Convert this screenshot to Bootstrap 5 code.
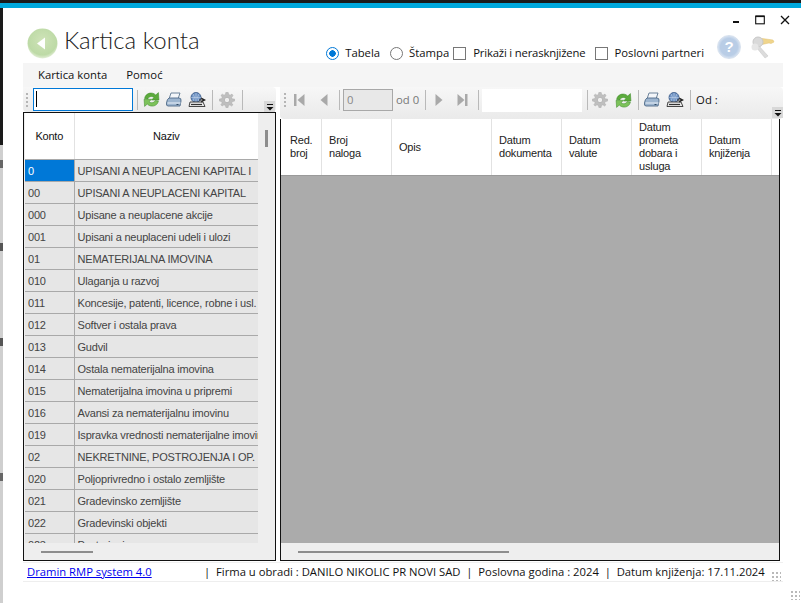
<!DOCTYPE html>
<html lang="sr">
<head>
  <meta charset="UTF-8">
  <title>Kartica konta</title>
  <link href="https://cdn.jsdelivr.net/npm/bootstrap@5.3.3/dist/css/bootstrap.min.css" rel="stylesheet">
  <style>
    html, body { height: 603px; }
    body { margin: 0; overflow: hidden; background: #fff; color: #111; font-family: "Open Sans", sans-serif; font-size: 11.3px; }
    .top-black { height: 3px; background: #1a1a1a; }
    .top-cyan { height: 5px; background: #00a8dc; }
    .edge-strip { width: 3px; height: 595px; flex: none; background: linear-gradient(#1a1a1a 0 137px, #cfcfcf 137px 152px, #666 152px 160px, #cfcfcf 160px 235px, #555 235px 243px, #cfcfcf 243px 330px, #555 330px 338px, #cfcfcf 338px 465px, #666 465px 473px, #cfcfcf 473px); }
    .win-main { width: 798px; height: 595px; }
    .caption-row { height: 20px; padding: 7px 11px 0 0; gap: 15px; }
    .head-row { height: 35px; padding: 0 26px 0 24px; }
    .win-title { font-family: Lato, "Open Sans", sans-serif; font-size: 24px; line-height: 30px; margin: -3px 0 0 6px; color: #222; font-weight: 300; height: 30px; }
    .opt-row { margin-left: auto; margin-top: 16px; height: 18px; line-height: 18px; }
    .opt-mark { width: 13px; height: 13px; border: 1px solid #777; background: #fff; flex: none; }
    .opt-round { border-radius: 50%; }
    .opt-on { border-color: #0078d7; background: radial-gradient(circle, #0078d7 0 3px, #fff 3.5px); }
    .opt-tight { letter-spacing: -.18px; }
    .menu-strip { width: 760px; height: 24px; margin-left: 20px; background: #f5f5f5; padding-left: 15px; gap: 19px; line-height: 24px; }
    .work-area { margin-left: 20px; width: 760px; gap: 4px; }
    .left-side { width: 253px; }
    .right-side { width: 503px; }
    .tool-bar { background: linear-gradient(#f7f7f7, #eaeaea); border-radius: 0 4px 4px 4px; position: relative; }
    .left-bar { height: 25px; padding-left: 3px; }
    .right-bar { height: 32px; padding: 0 0 6px 4px; }
    .grip-dots { width: 2px; height: 14px; margin-right: 5px; background: repeating-linear-gradient(#b5b5b5 0 2px, transparent 2px 4px); flex: none; }
    .tool-sep { width: 1px; height: 20px; background: #b9b9b9; flex: none; }
    .find-box { width: 100px; height: 23px; border: 1px solid #0078d7; background: #fff; padding: 2px 0 0 2px; flex: none; }
    .find-caret { width: 1px; height: 16px; background: #000; }
    .over-btn { width: 11px; height: 11px; background: #d8d8d8; margin-left: auto; align-self: flex-end; flex: none; }
    .left-bar .over-btn { margin-right: 1px; }
    .right-bar .over-btn { margin-bottom: -5px; }
    .page-box { width: 50px; height: 22px; border: 1px solid #a8a8a8; background: #e8e8e8; color: #888; padding-left: 3px; line-height: 20px; flex: none; }
    .page-of { color: #777; }
    .filter-box { width: 100px; height: 23px; background: #fff; flex: none; }
    .faded-icon { opacity: .8; }
    .sp-3 { margin-left: 3px; }
    .sp-4 { margin-left: 4px; }
    .sp-5 { margin-left: 5px; }
    .sp-6 { margin-left: 6px; }
    .sp-7 { margin-left: 7px; }
    .sp-9 { margin-left: 9px; }
    .sp-10 { margin-left: 10px; }
    .sp-11 { margin-left: 11px; }
    .sp-14 { margin-left: 14px; }
    .sp-15 { margin-left: 15px; }
    .after-10 { margin-right: 10px; }
    .grid-panel { border: 1px solid #111; background: #eee; overflow: hidden; }
    .left-panel { height: 449px; padding-left: 1px; }
    .right-panel { height: 442px; width: 500px; border-top: 0; }
    .grid-scroll { height: 430px; overflow: hidden; }
    .right-panel .grid-scroll { height: 424px; }
    .left-grid { width: 233px; background: #fff; }
    .vbar { width: 17px; padding-top: 17px; }
    .vbar-thumb { width: 3px; height: 17px; background: #8d8d8d; margin: 0 auto; }
    .konto-table { table-layout: fixed; width: 233px; margin: 0; font-family: "Liberation Sans", sans-serif; font-size: 11px; letter-spacing: -.2px; color: #444; border-collapse: collapse; }
    .konto-table th { height: 46px; background: #fff; color: #111; font-weight: 400; text-align: center; vertical-align: middle; padding: 0; border: 0; border-right: 1px solid #e2e2e2; border-bottom: 1px solid #a9a9a9; }
    .konto-table td { height: 22px; background: #e6e6e6; color: #444; padding: 1px 0 0 3px; border: 0; border-right: 1px solid #a9a9a9; border-bottom: 1px solid #a9a9a9; white-space: nowrap; overflow: hidden; vertical-align: middle; line-height: 20px; }
    .konto-table th:last-child, .konto-table td:last-child { border-right: 0; }
    .konto-table td.cell-on { background: #0078d7; color: #fff; }
    .code-col { width: 49px; }
    .hbar { height: 17px; padding-top: 8px; }
    .hbar-thumb { height: 2px; background: #8d8d8d; }
    .left-thumb { width: 52px; margin-left: 16px; }
    .right-thumb { width: 211px; margin-left: 17px; }
    .doc-head { height: 56px; background: #fff; font-family: "Liberation Sans", sans-serif; font-size: 11px; letter-spacing: -.2px; line-height: 13px; color: #222; }
    .doc-col { border-right: 1px solid #e2e2e2; padding-left: 7px; flex: none; width: 70px; }
    .doc-first { width: 41px; padding-left: 9px; }
    .doc-wide { width: 100px; }
    .doc-empty { height: 368px; background: #ababab; border-top: 1px solid #9a9a9a; }
    .status-row { width: 760px; height: 20px; margin: 1px 0 0 20px; border-top: 1px solid #f0f0f0; border-bottom: 1px solid #eee; line-height: 18px; font-size: 11.25px; }
    .status-link { color: #0000ee; width: 181px; padding-left: 4px; flex: none; }
    .status-text { white-space: pre; }
    .size-grip { width: 10px; height: 10px; margin-left: auto; margin-right: 2px; background: radial-gradient(circle, #b9b9b9 1px, transparent 1.2px) 0 0 / 4px 4px; flex: none; align-self: flex-end; }
    .win-grip { width: 10px; height: 10px; margin: 8px 1px 0 auto; background: radial-gradient(circle, #b9b9b9 1px, transparent 1.2px) 0 0 / 4px 4px; }
    .help-mark { width: 24px; height: 24px; margin: 7px 0 0 13px; border-radius: 50%; background: radial-gradient(circle, #b9cde6 55%, #e3ebf5 80%); border: 1px solid #d7e1ee; color: #fff; font-weight: 700; font-size: 15px; line-height: 22px; text-align: center; font-family: "Liberation Sans", sans-serif; flex: none; }
    .keys-mark { margin: 7px 0 0 9px; }
    .icon-defs { position: absolute; }
    svg { display: block; flex: none; }
  </style>
</head>
<body>
  <svg class="icon-defs" width="0" height="0">
    <defs>
      <symbol id="ic-refresh" viewBox="0 0 16 16">
        <path d="M1.500 7 C2.500 1.500 9 .5 12 3.800 L14.500 1.500 L15 8.500 L8 8.500 L10.300 6.200 C8.500 4.500 5.500 5 4.500 7.500 Z" fill="#5cab3c" stroke="#3d8a2a" stroke-width=".5"/>
        <path d="M14.500 9.500 C13.500 14.800 7 15.500 4 12.300 L1.500 14.500 L1 7.800 L8 7.800 L5.700 10 C7.500 11.700 10.500 11.200 11.500 9 Z" fill="#7cc25a" stroke="#3d8a2a" stroke-width=".5"/>
      </symbol>
      <symbol id="ic-print" viewBox="0 0 16 16">
        <path d="M5 1 H14 L12 7 H3 Z" fill="#f4f6f9" stroke="#5d7690" stroke-width=".9"/>
        <path d="M3 6 H13 Q15.500 6 15 9 L14 14 H2 Q0 14 .5 11 Q1 7 3 6 Z" fill="#9db5cf" stroke="#4e6a88" stroke-width=".9"/>
        <path d="M1.500 11 H14.500" stroke="#dfe8f1" stroke-width="1.200"/>
        <rect x="10.500" y="12" width="2" height="1" fill="#2f4963"/>
      </symbol>
      <symbol id="ic-preview" viewBox="0 0 18 16">
        <circle cx="8" cy="5.500" r="5" fill="#6f93c4" stroke="#2f4f7f" stroke-width=".8"/>
        <path d="M5 2 Q8 5 5 9 M8 .8 V10 M11 2 Q8 5 11 9 M3.200 5.500 H12.800" stroke="#c3d4ea" stroke-width=".6" fill="none"/>
        <path d="M2 10 H15 L17 14.500 H1 Z" fill="#e8e8e8" stroke="#333" stroke-width=".9"/>
        <path d="M11 8 H17 M13 6 L17 8 L13 10" stroke="#222" stroke-width="1.100" fill="none"/>
        <path d="M3 12.500 H14" stroke="#333" stroke-width="1.200"/>
      </symbol>
      <symbol id="ic-gear" viewBox="0 0 16 16">
        <path d="M6.800 .5 H9.200 L9.600 2.500 L11.200 3.200 L13 2.100 L14 3.800 L12.600 5.300 L13.200 6.900 L15.500 7 V9.100 L13.300 9.500 L12.600 11.100 L13.900 12.800 L12.600 14 L10.900 12.800 L9.400 13.400 L9.100 15.500 H6.900 L6.500 13.400 L4.900 12.800 L3.200 14 L1.900 12.700 L3.200 11 L2.600 9.500 L.5 9.100 V7 L2.600 6.700 L3.300 5.100 L2 3.400 L3.300 2.200 L5 3.200 L6.500 2.500 Z" fill="#b3b3b3" stroke="#969696" stroke-width=".5"/>
        <circle cx="8" cy="8" r="2.700" fill="#efefef" stroke="#969696" stroke-width=".7"/>
      </symbol>
      <symbol id="ic-more" viewBox="0 0 11 11">
        <rect x="3" y="3" width="6" height="1" fill="#111"/>
        <path d="M2.500 6 H9.500 L6 9.500 Z" fill="#111"/>
      </symbol>
    </defs>
  </svg>

  <div class="top-black"></div>
  <div class="top-cyan"></div>
  <div class="d-flex">
    <div class="edge-strip"></div>
    <div class="win-main">
      <div class="caption-row d-flex justify-content-end">
        <svg width="8" height="10" viewBox="0 0 8 10"><rect x="1" y="6" width="6" height="2" fill="#111"/></svg>
        <svg width="10" height="10" viewBox="0 0 10 10"><rect x=".7" y="1.200" width="8.600" height="7.600" fill="none" stroke="#111" stroke-width="1.100"/><rect x=".5" y=".5" width="9" height="1.600" fill="#111"/></svg>
        <svg width="10" height="10" viewBox="0 0 10 10"><path d="M1 1 L9 9 M9 1 L1 9" stroke="#111" stroke-width="1.300"/></svg>
      </div>
      <div class="head-row d-flex align-items-start">
        <svg width="31" height="31" viewBox="0 0 31 31">
          <defs><radialGradient id="backFill" cx=".5" cy=".4" r=".6"><stop offset="0" stop-color="#cfe3b8"/><stop offset=".8" stop-color="#bddaa6"/><stop offset="1" stop-color="#e4efd8"/></radialGradient></defs>
          <circle cx="15.500" cy="15.500" r="15" fill="url(#backFill)"/>
          <path d="M10 15.500 L18 9.500 V21.500 Z" fill="#fff"/>
        </svg>
        <h1 class="win-title">Kartica konta</h1>
        <div class="opt-row d-flex align-items-center">
          <span class="opt-mark opt-round opt-on"></span><span class="sp-6 after-10">Tabela</span>
          <span class="opt-mark opt-round"></span><span class="sp-6">Štampa</span>
          <span class="opt-mark sp-4"></span><span class="sp-7 opt-tight">Prikaži i nerasknjižene</span>
          <span class="opt-mark sp-10"></span><span class="sp-6">Poslovni partneri</span>
        </div>
        <div class="help-mark">?</div>
        <svg class="keys-mark" width="25" height="24" viewBox="0 0 25 24">
          <path d="M9 3 L23 5 L24 7 L21 8.500 L19 8 L12 9.500 Z" fill="#f0d58c" stroke="#e0c070" stroke-width=".5"/>
          <circle cx="8" cy="7" r="5" fill="#d9d9d9" stroke="#c8c8c8"/>
          <path d="M9 11 L18 21 L15 23 L6 12 Z" fill="#dcdcdc" stroke="#c4c4c4" stroke-width=".5"/>
          <circle cx="5" cy="12" r="3.500" fill="#e6e6e6"/>
        </svg>
      </div>
      <div class="menu-strip d-flex">
        <span>Kartica konta</span>
        <span>Pomoć</span>
      </div>
      <div class="work-area d-flex">
        <div class="left-side">
          <div class="tool-bar left-bar d-flex align-items-center">
            <span class="grip-dots"></span>
            <div class="find-box"><div class="find-caret"></div></div>
            <span class="tool-sep sp-4"></span>
            <svg class="sp-5" width="17" height="17"><use href="#ic-refresh"/></svg>
            <svg class="sp-6" width="16" height="16"><use href="#ic-print"/></svg>
            <svg class="sp-6" width="18" height="16"><use href="#ic-preview"/></svg>
            <span class="tool-sep sp-6"></span>
            <svg class="sp-6 faded-icon" width="16" height="16"><use href="#ic-gear"/></svg>
            <span class="tool-sep sp-7"></span>
            <span class="over-btn"><svg width="11" height="11"><use href="#ic-more"/></svg></span>
          </div>
          <div class="grid-panel left-panel">
            <div class="grid-scroll d-flex">
              <div class="left-grid">
                <table class="table konto-table">
                  <thead>
                    <tr><th class="code-col">Konto</th><th>Naziv</th></tr>
                  </thead>
                  <tbody id="kontoRows"></tbody>
                </table>
              </div>
              <div class="vbar"><div class="vbar-thumb"></div></div>
            </div>
            <div class="hbar"><div class="hbar-thumb left-thumb"></div></div>
          </div>
        </div>
        <div class="right-side">
          <div class="tool-bar right-bar d-flex align-items-center">
            <span class="grip-dots"></span>
            <svg class="sp-3" width="11" height="14" viewBox="0 0 11 14"><rect x="0" y="1" width="2.500" height="12" fill="#a9a9a9"/><path d="M10.500 1 V13 L3.500 7 Z" fill="#a9a9a9"/></svg>
            <svg class="sp-15" width="8" height="14" viewBox="0 0 8 14"><path d="M7.500 1 V13 L.5 7 Z" fill="#a9a9a9"/></svg>
            <span class="tool-sep sp-11"></span>
            <div class="page-box sp-3">0</div>
            <span class="page-of sp-3">od 0</span>
            <span class="tool-sep sp-6"></span>
            <svg class="sp-9" width="8" height="14" viewBox="0 0 8 14"><path d="M.5 1 V13 L7.500 7 Z" fill="#a9a9a9"/></svg>
            <svg class="sp-14" width="11" height="14" viewBox="0 0 11 14"><path d="M.5 1 V13 L7.500 7 Z" fill="#a9a9a9"/><rect x="8" y="1" width="2.500" height="12" fill="#a9a9a9"/></svg>
            <span class="tool-sep sp-10"></span>
            <div class="filter-box sp-3"></div>
            <span class="tool-sep sp-5"></span>
            <svg class="sp-4 faded-icon" width="16" height="16"><use href="#ic-gear"/></svg>
            <svg class="sp-7" width="17" height="17"><use href="#ic-refresh"/></svg>
            <span class="tool-sep sp-6"></span>
            <svg class="sp-5" width="16" height="16"><use href="#ic-print"/></svg>
            <svg class="sp-6" width="18" height="16"><use href="#ic-preview"/></svg>
            <span class="tool-sep sp-6"></span>
            <span class="sp-5">Od :</span>
            <span class="over-btn"><svg width="11" height="11"><use href="#ic-more"/></svg></span>
          </div>
          <div class="grid-panel right-panel">
            <div class="grid-scroll">
              <div class="doc-head d-flex">
                <div class="doc-col doc-first d-flex align-items-center">Red.<br>broj</div>
                <div class="doc-col d-flex align-items-center">Broj<br>naloga</div>
                <div class="doc-col doc-wide d-flex align-items-center">Opis</div>
                <div class="doc-col d-flex align-items-center">Datum<br>dokumenta</div>
                <div class="doc-col d-flex align-items-center">Datum<br>valute</div>
                <div class="doc-col d-flex align-items-center">Datum<br>prometa<br>dobara i<br>usluga</div>
                <div class="doc-col d-flex align-items-center">Datum<br>knjiženja</div>
              </div>
              <div class="doc-empty"></div>
            </div>
            <div class="hbar"><div class="hbar-thumb right-thumb"></div></div>
          </div>
        </div>
      </div>
      <div class="status-row d-flex">
        <a class="status-link" href="#">Dramin RMP system 4.0</a>
        <span class="status-text">|  Firma u obradi : DANILO NIKOLIC PR NOVI SAD  |  Poslovna godina : 2024  |  Datum knjiženja: 17.11.2024</span>
        <span class="size-grip"></span>
      </div>
      <div class="win-grip"></div>
    </div>
  </div>

  <script>
    const konta = [
      ['0', 'UPISANI A NEUPLACENI KAPITAL I'],
      ['00', 'UPISANI A NEUPLACENI KAPITAL'],
      ['000', 'Upisane a neuplacene akcije'],
      ['001', 'Upisani a neuplaceni udeli i ulozi'],
      ['01', 'NEMATERIJALNA IMOVINA'],
      ['010', 'Ulaganja u razvoj'],
      ['011', 'Koncesije, patenti, licence, robne i usl.'],
      ['012', 'Softver i ostala prava'],
      ['013', 'Gudvil'],
      ['014', 'Ostala nematerijalna imovina'],
      ['015', 'Nematerijalna imovina u pripremi'],
      ['016', 'Avansi za nematerijalnu imovinu'],
      ['019', 'Ispravka vrednosti nematerijalne imovine'],
      ['02', 'NEKRETNINE, POSTROJENJA I OP.'],
      ['020', 'Poljoprivredno i ostalo zemljište'],
      ['021', 'Gradevinsko zemljište'],
      ['022', 'Gradevinski objekti'],
      ['023', 'Postrojenja']
    ];
    const rows = document.getElementById('kontoRows');
    konta.forEach((k, i) => {
      const tr = document.createElement('tr');
      tr.innerHTML = '<td class="' + (i === 0 ? 'cell-on' : '') + '">' + k[0] + '</td><td>' + k[1] + '</td>';
      rows.appendChild(tr);
    });
  </script>
  <script src="https://cdn.jsdelivr.net/npm/bootstrap@5.3.3/dist/js/bootstrap.bundle.min.js"></script>
</body>
</html>
